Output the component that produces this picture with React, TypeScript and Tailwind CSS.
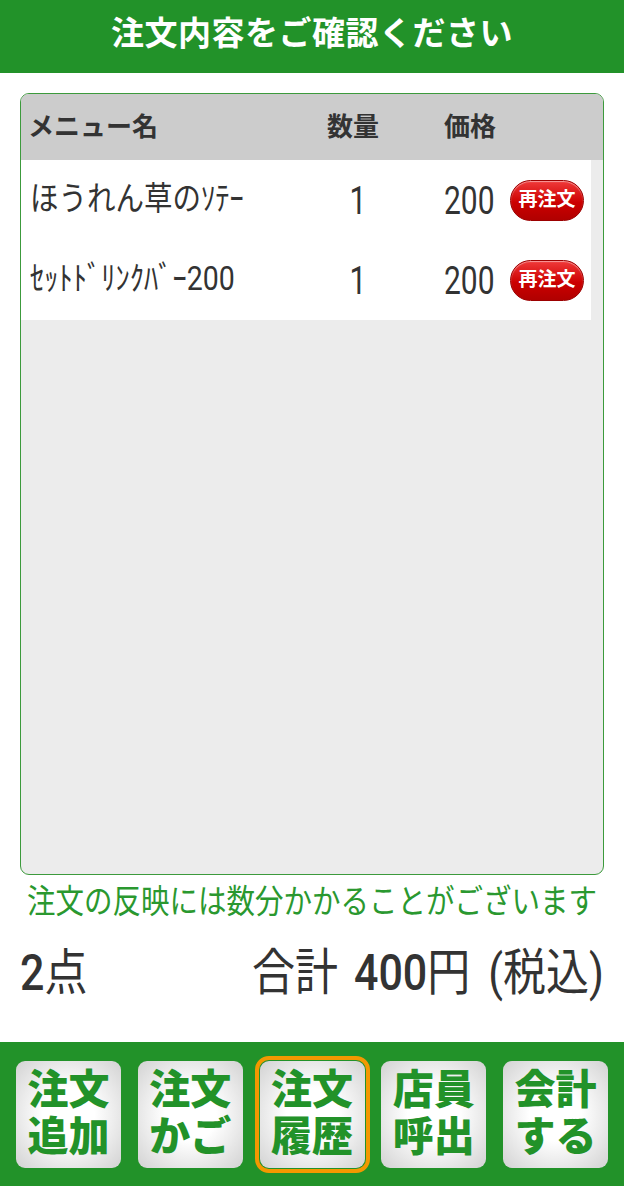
import React from "react";

type Item = { name: string; qty: number; price: number };

const items: Item[] = [
  { name: "ほうれん草のｿﾃｰ", qty: 1, price: 200 },
  { name: "ｾｯﾄﾄﾞﾘﾝｸﾊﾞｰ200", qty: 1, price: 200 },
];

const navButtons = [
  { top: "注文", bottom: "追加", active: false },
  { top: "注文", bottom: "かご", active: false },
  { top: "注文", bottom: "履歴", active: true },
  { top: "店員", bottom: "呼出", active: false },
  { top: "会計", bottom: "する", active: false },
];

// the device font is tall and narrow, stretch text a bit to match
const tall = "inline-block scale-y-[1.15]";
const taller = "inline-block scale-y-[1.3]";

export default function App() {
  return (
    <div className="w-[624px] h-[1200px] bg-white font-['Roboto','Noto_Sans_CJK_JP',sans-serif] text-[#333]">
      {/* Title bar */}
      <div className="h-[73px] bg-[#229229] flex items-center justify-center pb-[6px]">
        <h1 className="text-[33px] font-bold text-white tracking-[0.5px]">
          注文内容をご確認ください
        </h1>
      </div>

      {/* Order list */}
      <div className="mx-5 mt-5 h-[782px] rounded-[9px] border border-[#3c9a3c] bg-[#ececec] overflow-hidden flex flex-col">
        <div className="h-[66px] bg-[#cccccc] flex items-center text-[26px] font-bold shrink-0">
          <div className="w-[279px] pl-[7px]">メニュー名</div>
          <div className="w-[106px] text-center">数量</div>
          <div className="w-[38px]" />
          <div className="w-[66px]">価格</div>
        </div>
        <div className="mr-[12px] bg-white">
          {items.map((item, i) => (
            <div key={i} className="h-[80px] flex items-center">
              <div className="w-[279px] pl-[9px] whitespace-nowrap text-[28.5px]">
                <span className={tall}>{item.name}</span>
              </div>
              <div className="w-[116px] text-center text-[30px]">
                <span className={taller}>{item.qty}</span>
              </div>
              <div className="w-[28px]" />
              <div className="w-[66px] text-[30px]">
                <span className={taller}>{item.price}</span>
              </div>
              <button className="w-[74px] h-[41px] rounded-full border border-[#9c0000] bg-[linear-gradient(#f03a3a,#cc0000_55%,#b00000)] text-white text-[19px] font-bold shadow-[inset_0_1px_1px_rgba(255,255,255,0.5)]">
                再注文
              </button>
            </div>
          ))}
        </div>
      </div>

      {/* Note */}
      <p className="mt-[8px] text-center text-[28.5px] leading-[40px] text-[#2a982f]">
        <span className={tall}>注文の反映には数分かかることがございます</span>
      </p>

      {/* Summary */}
      <div className="mt-[22px] px-5 flex items-center justify-between h-[56px] text-[43px] text-[#333]">
        <div className={tall}>
          <span className="font-medium">2</span>点
        </div>
        <div className={tall}>
          合計<span className="ml-[16px] font-medium">400</span>円
          <span className="ml-[18px]">(税込)</span>
        </div>
      </div>

      {/* Bottom navigation */}
      <div className="mt-[41px] h-[144px] bg-[#229229] flex items-center justify-between px-4">
        {navButtons.map((b, i) => (
          <button
            key={i}
            className={
              "w-[105px] h-[107px] rounded-[9px] bg-[radial-gradient(ellipse_at_center,#ffffff_35%,#d2d2d2_100%)] flex flex-col items-center justify-center text-[41px] leading-[47px] font-black text-[#229229] " +
              (b.active ? "outline-4 outline-[#f39800] outline-offset-1" : "")
            }
          >
            <span>{b.top}</span>
            <span>{b.bottom}</span>
          </button>
        ))}
      </div>
    </div>
  );
}
